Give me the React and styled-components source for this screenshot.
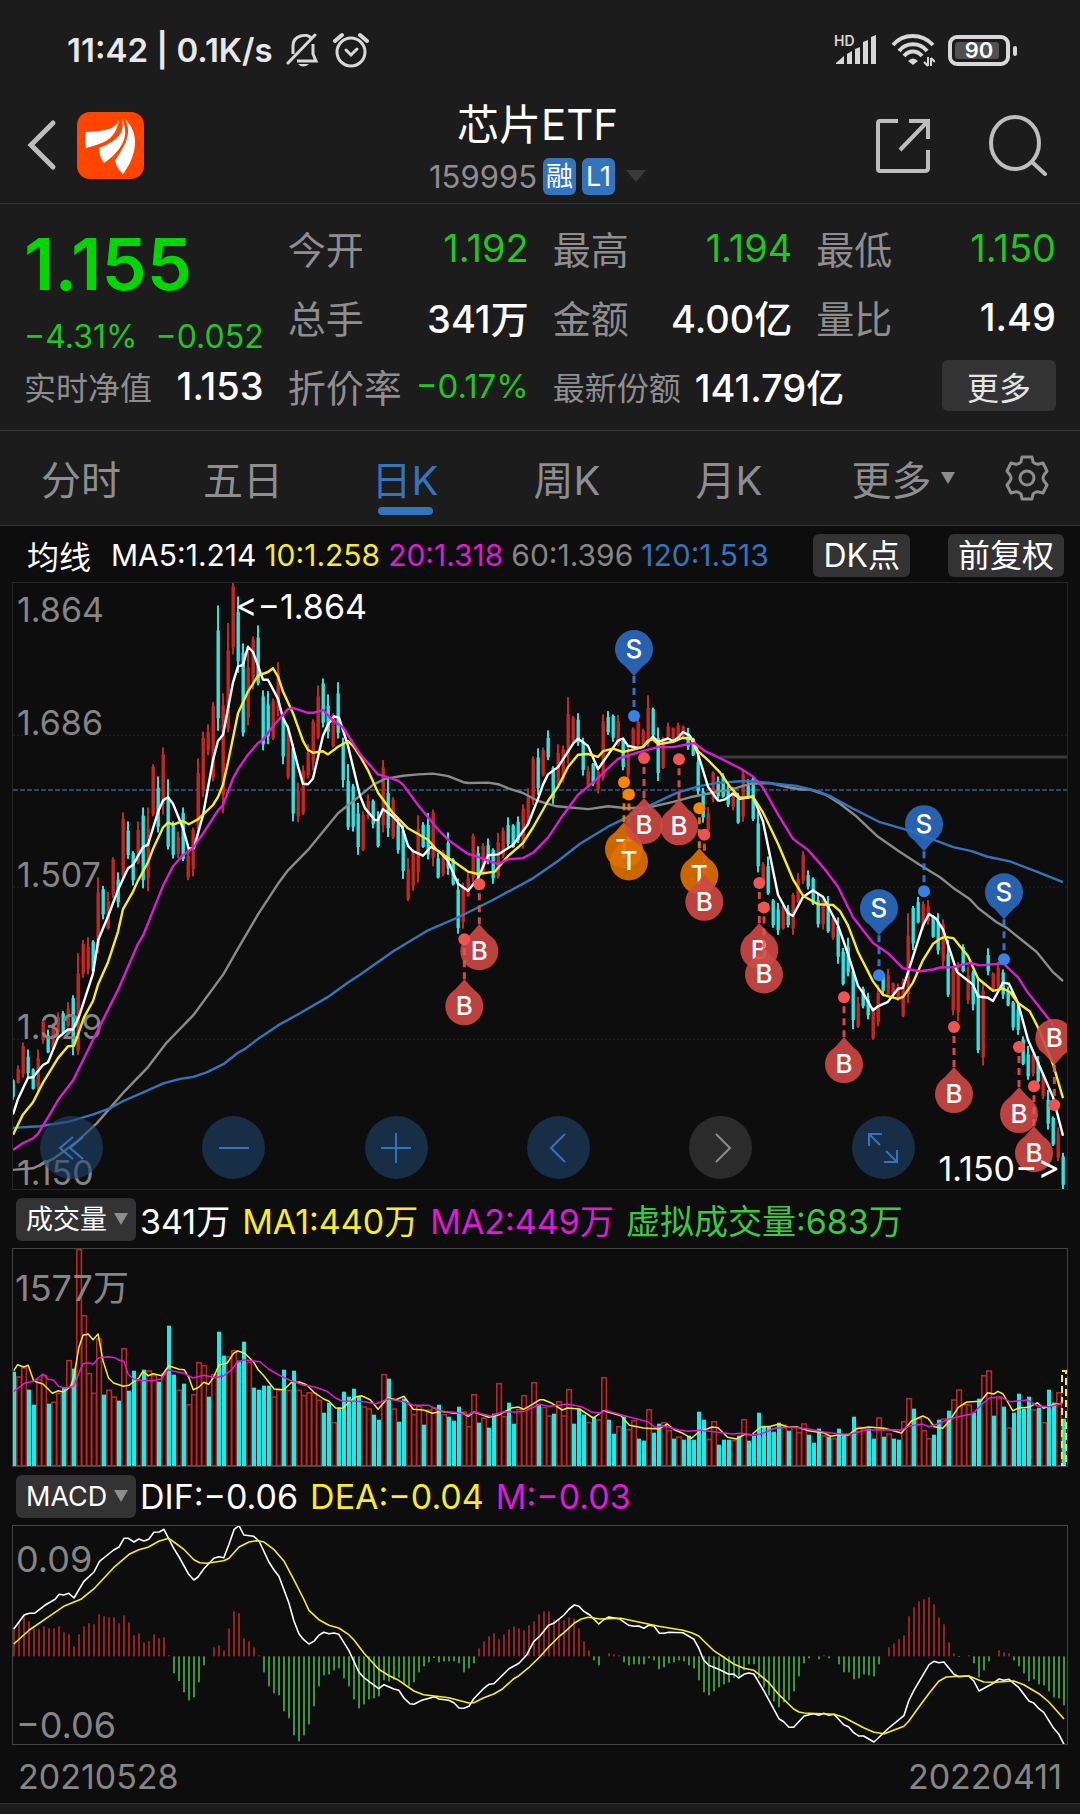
import React, { useState } from "react";
import styled, { createGlobalStyle } from "styled-components";

const UP = "#c32722";
const DOWN = "#2fe3e0";
const YELLOW = "#f8ea2c";
const MAGENTA = "#dd1bd6";
const BLUE = "#3474bd";
const GRAY = "#858585";

// r = closed up, c = closed down, followed by the high and low level
const CANDLES = `
c1247-1297 r1213-1257 r1157-1243 c1174-1242 c1220-1272 r1174-1275 r1100-1160 c1125-1183 r1110-1175 r1083-1140
c1080-1135 r1058-1120 c1041-1188 r938-1187 r906-998 r899-990 c906-985 r752-938 c773-855 r788-880
r703-803 c740-826 r593-755 c615-707 c688-772 r615-720 c581-779 r581-786 r475-603 c505-642
r434-598 c512-684 c615-706 r640-705 c581-712 r680-759 r630-750 r461-640 r395-555 r377-453
r323-517 c86-393 r301-595 r129-397 r31-206 c64-251 c179-407 r190-380 r162-292 c135-282
c294-441 c296-426 r314-416 r225-358 c350-475 r380-512 c425-615 r520-617 r478-600 r426-510
r365-490 r282-414 c265-385 c304-412 r350-434 c274-412 c410-532 c475-636 c523-640 c570-697
r590-688 r549-610 c561-632 c590-679 r465-642 c510-653 r556-658 c605-694 c625-756 r705-810
r683-785 r600-765 c617-680 c595-708 r586-725 c693-755 r685-750 c642-746 c705-772 c755-890
r765-878 r740-800 r645-765 c676-760 r668-745 c657-720 c681-768 r643-755 r630-705 c605-682
c622-680 c603-668 r573-682 r534-625 r456-575 c436-550 r434-505 c392-465 c480-572 r426-530
r429-520 r311-475 r357-425 c350-430 c410-503 r480-530 c472-528 r480-546 r353-515 c345-403
c353-420 r354-430 c410-490 r430-515 r385-440 r355-435 r388-435 r306-432 c336-412 c385-516
r408-487 r373-412 r385-415 r373-410 r380-410 c386-440 c410-455 c450-552 c533-618 r580-640
r492-568 c505-562 c497-557 c525-580 r530-588 c545-621 r487-616 c512-560 c505-614 c590-740
r715-770 c701-795 c805-876 c815-893 r818-880 c820-875 r790-893 r742-815 r688-768 c735-782
c752-820 c792-875 r795-880 c798-888 r850-905 c850-964 c925-1017 c900-995 c975-1124 r1045-1121
c1020-1073 c1035-1100 r1070-1150 r1015-1117 c985-1038 r976-1040 r1010-1045 r1012-1055 r1000-1095 r840-1060
c822-930 c800-865 r811-880 r808-868 c845-900 c840-941 r855-975 c905-1045 r970-1090 r960-1105
c916-985 r970-1062 c980-1078 c1000-1183 r1010-1213 c926-992 r985-1030 r960-1025 c978-1050 c1020-1068
c1055-1127 c1060-1138 c1142-1212 c1165-1248 r1185-1240 c1190-1255 r1230-1295 c1273-1370 c1338-1410 r1365-1447
c1427-1519`;

// every average is kept as three runs, one for each third of the plot
const AVERAGES = [
    {
        color: "#8a8a8a",
        runs: [
            "39,1469 99,1465 159,1442 189,1425 230,1400 290,1355 375,1275 444,1217 500,1157 580,1090 670,990 714,927 774,843 834,768 864,735 924,685 1014,595",
            "0,552 40,525 75,511 130,503 175,500 220,498 265,504 310,519 325,521 385,520 415,524 445,534 490,546 535,565 590,578 685,585 745,578 800,583 870,580 940,567 990,556",
            "0,541 30,538 90,523 150,521 195,530 245,537 270,537 320,551 360,572 405,600 470,650 540,690 600,722 660,752 700,778 750,806 775,828 830,862 860,876 950,935 1000,985 1029,1006",
        ],
    },
    {
        color: BLUE,
        runs: [
            "39,1366 120,1362 210,1350 280,1333 330,1318 370,1300 430,1279 490,1257 540,1246 580,1241 620,1230 670,1210 714,1182 734,1173 774,1148 834,1115 900,1085 984,1045 1044,1010",
            "0,991 100,933 204,882 300,848 400,807 520,754 594,712 660,670 744,628 820,598 870,576 950,545 1020,528",
            "0,520 75,516 115,518 180,524 230,528 290,540 330,553 400,584 480,617 570,638 640,660 700,678 755,688 800,701 870,713 950,738 1029,764",
        ],
    },
    {
        color: "#fff",
        runs: [
            "39,1333 54,1295 84,1243 99,1242 129,1212 144,1205 174,1145 204,1125 219,1125 237,1093 279,988 295,905 324,848 354,783 384,730 399,722 429,678 444,672 475,590 490,563 504,556 519,572 549,632 566,682 582,680 609,600 639,465 654,418 669,403 699,275 714,235 729,232 744,187 759,200 789,268 804,268 834,315 849,362 864,385 894,480 909,523 924,524 939,510 969,405 984,378 1002,358 1017,361 1044,430",
            "0,552 15,583 45,612 54,612 69,585 99,603 126,628 144,675 159,688 189,699 213,677 240,690 264,712 294,768 324,785 354,755 384,698 414,696 459,673 504,622 534,560 549,525 564,500 594,482 639,425 654,412 684,430 714,487 774,417 789,412 804,430 834,435 849,433 879,407 894,420 924,412 939,418 954,410 969,396 990,405 1014,450 1044,530 1074,564",
            "0,564 15,561 39,547 60,560 99,554 129,615 174,795 204,840 219,846 249,800 279,784 309,800 354,870 384,940 414,1018 429,1035 459,1078 474,1068 504,1057 534,1025 549,1023 609,870 627,842 648,853 669,880 711,984 759,1015 774,1044 804,1047 819,1055 849,1010 867,1013 894,1060 924,1150 999,1290 1029,1385",
        ],
    },
    {
        color: YELLOW,
        runs: [
            "39,1383 69,1333 99,1303 129,1255 174,1195 204,1166 222,1165 252,1095 279,1055 294,1015 324,960 354,885 369,830 399,787 414,760 444,715 459,683 489,630 504,618 519,623 549,614 566,622 594,610 639,575 654,555 669,525 684,470 714,350 744,297 774,258 804,249 819,240 834,260 849,297 879,350 909,418 924,440 939,447 969,443 984,451 1014,432 1044,418 1059,430",
            "0,455 24,490 54,545 99,595 144,632 204,660 234,688 279,712 324,738 354,744 405,738 444,700 489,668 519,630 564,565 594,530 624,482 654,452 684,450 714,457 729,443 759,437 789,445 834,436 849,432 864,417 879,414 894,426 939,420 969,410 999,414 1014,443 1044,465",
            "0,495 30,530 60,557 99,555 129,593 174,670 219,757 249,797 294,818 339,820 360,835 384,870 414,935 459,1007 489,1040 534,1050 549,1045 579,1010 609,955 639,915 660,903 675,898 700,901 744,945 774,1000 819,1030 849,1025 870,1033 894,1060 929,1080 954,1120 999,1210 1029,1293",
        ],
    },
    {
        color: MAGENTA,
        runs: [
            "39,1420 69,1403 99,1392 114,1380 144,1340 174,1298 219,1250 279,1150 354,1028 414,915 429,895 489,773 519,725 549,698 579,680 609,645 654,588 669,575 699,510 714,487 744,452 774,423 789,415 819,382 864,340 879,337 924,349 940,349 969,342 999,368 1029,385",
            "0,450 54,500 69,503 114,515 129,525 174,575 234,635 264,660 324,695 339,698 414,720 444,708 489,705 519,692 564,655 609,600 654,550 699,520 744,485 774,462 834,446 894,433 939,433 1003,423 1035,443",
            "0,460 60,485 99,505 129,532 174,598 219,658 264,685 309,727 354,775 399,850 459,913 504,938 549,975 600,982 640,978 660,973 700,972 750,962 780,968 850,963 894,997 924,1035 990,1103 1008,1125",
        ],
    },
];

// kind, position, level of the traded candle, 1 = pin below it, -1 = above it
const TRADES = [
    ["S", 1902, 357, -1],
    ["T", 1872, 519, 1],
    ["T", 1887, 549, 1],
    ["B", 1932, 460, 1],
    ["B", 2037, 463, 1],
    ["T", 2098, 583, 1],
    ["B", 2113, 648, 1],
    ["B", 1438, 769, 1],
    ["B", 1393, 904, 1],
    ["B", 2278, 766, 1],
    ["B", 2292, 826, 1],
    ["B", 2532, 1046, 1],
    ["S", 2637, 992, -1],
    ["S", 2772, 786, -1],
    ["S", 3012, 953, -1],
    ["B", 2862, 1119, 1],
    ["B", 3057, 1168, 1],
    ["B", 3102, 1264, 1],
    ["B", 3163, 1310, -1],
];

const TRADE_COLORS = {
    S: { pin: "#2c6cc0", dot: "#3583e6" },
    B: { pin: "#d04846", dot: "#f25352" },
    T: { pin: "#e07000", dot: "#ff8400" },
};

const VOLUMES = `
c543 r557 r530 c597 c642 r565 r553 c639 r633 r606 c590 r508 c534 r175 r373 r547 r606 r443 c612 r597
r617 c630 r472 c600 c540 r567 c537 r539 r553 c573 r548 c405 c552 r597 c579 r640 r610 r514 r523 c618
r550 c423 c495 r497 r478 c510 c453 r513 c591 c597 c585 c585 r617 r597 c537 r597 c540 r597 r613 r604
r606 r627 c666 c636 r694 c650 c603 c618 c594 c615 r647 r653 c672 c687 r550 c564 r653 c693 c624 r640
r670 r645 c702 r656 r650 c642 r670 c678 c690 c648 r662 r706 r610 c696 r680 c711 c669 r577 r676 c636
c699 r655 r613 r650 r574 c640 r648 r674 c669 r631 r674 r595 c699 c654 c672 r694 c678 r686 r559 c687
c729 r706 c678 r715 r688 c744 c750 r655 c726 c699 r694 r718 c744 r737 c747 c735 c747 c663 c687 r744
r691 c762 c747 c747 r748 c735 r685 c750 c735 c666 c705 c708 c723 c696 r702 c720 r706 r724 r698 c732
c756 c714 r734 c738 r742 c714 c735 r732 c678 r708 r712 c714 c744 r680 c738 r728 c744 c747 r691 r622
c654 r682 r718 r742 c732 c687 r683 c660 r626 r596 r640 r641 c666 c624 r553 r539 c675 r622 c648 r710
c666 c609 c654 c618 r656 c651 r694 c597 c636 r604 c684`;

const VOLUME_LINES = [
    {
        color: YELLOW,
        runs: [
            "40,540 51,522 69,529 82,524 98,571 125,580 152,608 170,600 185,604 205,588 214,560 229,470 241,434 256,430 270,447 285,430 299,510 315,562 330,577 358,587 374,584 403,562 415,542 430,555 445,549 470,555 490,525 520,536 535,537 548,560 561,597 577,590 592,575 606,581 620,560 636,523 660,517 678,488 690,481 710,487 737,515 750,538 766,555 796,595 825,597 845,576 870,574 890,582 912,605 940,625 955,632 975,652 995,653 1030,620 1050,615 1075,627 1098,656 1127,621 1150,627 1173,617 1200,656 1230,658 1256,668 1283,662 1318,668 1345,668 1360,677 1376,664 1420,680 1450,672 1485,652 1505,649 1520,656 1540,645",
            "0,627 10,627 35,638 65,658 80,652 115,655 155,682 185,660 235,675 260,704 300,712 345,715 370,700 390,717 415,728 440,743 465,720 485,715 500,709 517,711 545,740 570,745 595,731 615,732 640,710 670,707 695,700 720,710 745,708 780,720 825,727 845,737 870,732 895,733 920,714 955,709 1000,713 1050,727 1060,714 1080,690 1112,676 1128,684 1145,708 1170,713 1190,690 1215,650 1240,634 1280,632 1300,606 1318,610 1330,602 1345,610 1373,660 1390,652 1420,650 1445,636 1462,653 1490,642 1518,638",
        ],
    },
    {
        color: MAGENTA,
        runs: [
            "40,602 72,577 98,572 125,550 140,566 155,568 170,587 190,592 214,587 229,548 241,519 258,516 270,521 287,501 315,498 333,501 345,508 360,512 372,551 389,566 415,570 440,570 470,564 488,537 505,542 535,548 560,562 592,554 625,561 650,555 670,540 690,514 710,507 737,511 755,513 780,535 810,553 840,568 880,583 912,588 950,602 975,622 995,632 1030,632 1060,633 1090,640 1127,625 1175,633 1200,644 1245,644 1283,663 1318,665 1360,672 1376,664 1425,676 1460,664 1505,664 1525,661",
            "0,641 25,647 60,643 80,640 120,648 150,664 175,667 190,659 235,672 290,687 315,694 333,710 360,706 405,718 430,722 465,719 505,723 560,730 580,728 615,732 640,731 685,712 740,710 780,715 825,724 870,730 905,729 945,719 985,717 1050,718 1070,707 1110,700 1130,708 1155,700 1190,684 1225,676 1255,670 1285,640 1305,622 1335,618 1365,633 1415,628 1445,646 1480,648 1518,637",
        ],
    },
];

const HISTOGRAM = `
470 455 437 453 475 477 468 474 474 468 486 492 528 492 468 459 462 432 438 441
441 459 435 456 495 489 516 513 492 504 501 555 609 632 666 690 681 636 585 558
531 525 540 474 423 429 504 513 531 555 606 648 669 675 723 744 795 813 795 762
708 648 615 612 600 594 624 648 687 714 702 687 684 678 630 633 628 622 642 648
636 606 588 576 563 576 573 573 573 579 606 594 579 534 513 498 489 507 492 477
468 474 480 465 453 432 423 423 447 447 450 441 444 474 513 540 570 585 558 549
552 555 576 585 582 582 582 564 570 597 591 579 576 570 573 585 594 630 666 675
663 651 642 636 622 618 600 582 582 624 651 675 693 711 696 690 663 618 579 564
558 567 555 564 558 582 606 606 627 624 612 615 618 582 558 531 519 507 495 438
411 393 387 381 402 441 462 516 549 560 558 555 579 621 600 573 558 540 546 549
570 588 609 633 627 642 645 663 681 684 705`;

const MACD_LINES = [
    {
        color: "#fff",
        runs: [
            "40,476 70,434 85,429 100,429 130,405 160,387 172,372 185,374 200,369 215,383 243,334 273,305 289,273 330,239 346,230 360,204 373,204 389,215 403,206 418,212 432,207 447,186 463,185 476,177 505,235 520,260 548,312 563,329 575,320 592,295 621,264 636,259 650,262 665,222 680,177 694,166 708,194 737,198 752,212 781,275 796,299 810,318 839,398 853,450 868,490 882,508 897,521 912,513 926,495 940,486 955,490 970,488 984,492 1013,540 1042,605 1057,622 1071,633 1100,655 1115,643 1144,656 1158,660 1173,683 1190,700 1202,702 1225,690 1262,679 1275,686 1303,690 1318,697 1333,713 1347,714 1362,708 1376,685 1405,654 1420,642 1434,640 1478,595 1507,579 1530,553 1550,514",
            "0,497 25,465 40,459 70,434 85,416 100,404 113,408 127,423 145,434 171,461 185,448 200,440 230,445 258,465 273,468 287,467 302,474 316,465 331,467 347,489 360,489 375,486 415,487 447,507 461,533 475,568 490,585 519,597 548,612 563,611 577,623 592,612 606,608 621,611 650,661 694,745 708,754 723,771 737,771 767,737 781,733 796,730 810,735 824,729 839,735 854,732 882,763 897,770 911,787 926,797 940,797 970,815 1013,773 1057,736 1071,692 1086,660 1130,583 1144,573 1158,577 1173,575 1202,612 1216,619 1245,617 1260,632 1275,662 1318,638 1333,626 1347,630 1362,627 1391,652 1420,692 1434,698 1449,715 1463,726 1492,774 1507,792 1522,822",
        ],
    },
    {
        color: YELLOW,
        runs: [
            "40,521 85,479 130,447 185,408 235,387 273,355 330,292 375,252 403,238 430,231 461,213 490,204 505,215 535,238 563,268 580,277 600,279 650,271 665,264 694,230 723,215 745,211 765,214 796,238 825,273 853,327 882,386 897,420 926,448 955,465 984,473 1013,493 1028,509 1057,549 1100,597 1130,616 1158,630 1202,662 1230,673 1262,677 1303,682 1362,698 1376,697 1405,682 1434,671 1460,655 1492,625 1507,616 1535,592",
            "0,559 25,530 55,499 70,487 100,458 120,446 140,441 175,446 235,444 345,468 415,480 440,487 461,497 505,541 563,581 592,594 621,600 636,612 665,637 694,673 737,716 752,725 767,728 854,732 882,741 940,772 970,786 1000,790 1057,768 1071,753 1100,711 1130,669 1158,633 1180,620 1216,618 1245,617 1289,635 1320,636 1376,632 1405,643 1449,670 1478,695 1522,746",
        ],
    },
];

const words = (text) => text.trim().split(/\s+/);
const barX = (i) => i * 5;

// price plot scale
const priceX = (x) => x / 3 - 13;
const priceY = (v) => (v - 31) / 2.45;

// scale of the two lower plots
const subX = (x) => x / 2.904 - 13;
const subY = (top) => (v) => (v - top) / 3;
const volumeY = subY(175);
const macdY = subY(167);

const toPoints = (runs, span, fx, fy) =>
    runs
        .map((run, part) =>
            words(run)
                .map((pair) => {
                    const [x, y] = pair.split(",").map(Number);
                    return `${fx(x + part * span).toFixed(1)},${fy(y).toFixed(1)}`;
                })
                .join(" ")
        )
        .join(" ");

const Trade = ({ kind, x, y, side }) => {
    const { pin, dot } = TRADE_COLORS[kind];
    const cy = y + side * 67;
    const tip = cy - side * 27;
    return (
        <g>
            <g opacity="0.9">
                <circle cx={x} cy={cy} r="19" fill={pin} />
                <path d={`M${x - 10} ${cy - side * 16} L${x} ${tip} L${x + 10} ${cy - side * 16} Z`} fill={pin} />
            </g>
            <line x1={x} y1={tip} x2={x} y2={y} stroke={dot} strokeWidth="3" strokeDasharray="7 5" opacity="0.85" />
            <ChartText x={x} y={cy + 9} $size={26} $medium textAnchor="middle" fill="#fff">{kind}</ChartText>
            <circle cx={x} cy={y} r="6" fill={dot} />
        </g>
    );
};

const PriceChart = () => (
    <Plot viewBox="0 0 1054 606" role="img" aria-label="日K">
        {[404, 776, 1149].map((v) => (
            <line key={v} x1="0" x2="1054" y1={priceY(v)} y2={priceY(v)} stroke="#222" strokeDasharray="2 2" />
        ))}
        <line x1="0" x2="1054" y1="207" y2="207" stroke="#2f5b92" strokeWidth="1.4" strokeDasharray="5 2" />
        <line x1="707" x2="1054" y1={priceY(457)} y2={priceY(457)} stroke="#3a3a3a" strokeWidth="3" />
        {words(CANDLES).map((candle, i) => {
            const [high, low] = candle.slice(1).split("-").map((v) => priceY(Number(v)));
            const size = low - high;
            const top = high + size * [0.05, 0.2, 0.1, 0.25][i % 4];
            const bottom = low - size * [0.15, 0.04, 0.1][i % 3];
            const color = candle[0] === "r" ? UP : DOWN;
            return (
                <g key={i} fill={color}>
                    <rect x={barX(i) - 1} y={high} width="2" height={size} />
                    <rect x={barX(i) - 1.5} y={top} width="3.4" height={bottom - top} />
                </g>
            );
        })}
        <ChartText x="4" y="39" fill={GRAY}>1.864</ChartText>
        <ChartText x="4" y="152" fill={GRAY}>1.686</ChartText>
        <ChartText x="4" y="304" fill={GRAY}>1.507</ChartText>
        <ChartText x="4" y="456" fill={GRAY}>1.329</ChartText>
        <ChartText x="4" y="602" fill={GRAY}>1.150</ChartText>
        {AVERAGES.map(({ color, runs }) => (
            <polyline key={color} points={toPoints(runs, 1080, priceX, priceY)} fill="none" stroke={color} strokeWidth="2.4" strokeLinejoin="round" />
        ))}
        {TRADES.map(([kind, x, v, side]) => (
            <Trade key={`${x}-${v}`} kind={kind} x={priceX(x)} y={priceY(v)} side={side} />
        ))}
        <ChartText x="222" y="36" fill="#fff">&lt;−1.864</ChartText>
        <ChartText x="1047" y="598" fill="#fff" textAnchor="end">1.150−&gt;</ChartText>
    </Plot>
);

const VolumeChart = () => (
    <Plot viewBox="0 0 1054 217" role="img" aria-label="成交量">
        {words(VOLUMES).map((bar, i) => {
            const y = volumeY(Number(bar.slice(1)));
            return bar[0] === "c" ? (
                <rect key={i} x={barX(i) - 1} y={y} width="4" height={217 - y} fill="#17ece9" />
            ) : (
                <rect key={i} x={barX(i) - 1.2} y={y + 0.7} width="4.6" height={216 - y} fill="#1c0505" stroke="#b02c29" strokeWidth="1.6" />
            );
        })}
        <rect x="1049" y={volumeY(541)} width="4" height={217 - volumeY(541)} fill="none" stroke={YELLOW} strokeWidth="2" strokeDasharray="7 4" />
        {VOLUME_LINES.map(({ color, runs }) => (
            <polyline key={color} points={toPoints(runs, 1568, subX, volumeY)} fill="none" stroke={color} strokeWidth="1.5" strokeLinejoin="round" />
        ))}
        <ChartText x="2" y="52" $size={36} fill={GRAY}>1577万</ChartText>
    </Plot>
);

const MacdChart = () => (
    <Plot viewBox="0 0 1054 218" role="img" aria-label="MACD">
        {words(HISTOGRAM).map((v, i) => {
            const y = macdY(Number(v));
            const zero = macdY(558);
            return (
                <rect key={i} x={barX(i)} y={Math.min(y, zero)} width="2" height={Math.abs(y - zero)} fill={y < zero ? "#8c2422" : "#3d9440"} />
            );
        })}
        <ChartText x="3" y="46" $size={36} fill={GRAY}>0.09</ChartText>
        <ChartText x="3" y="212" $size={36} fill={GRAY}>−0.06</ChartText>
        {MACD_LINES.map(({ color, runs }) => (
            <polyline key={color} points={toPoints(runs, 1568, subX, macdY)} fill="none" stroke={color} strokeWidth="1.6" strokeLinejoin="round" />
        ))}
    </Plot>
);

const StatusIcons = () => (
    <StatusGroup>
        <svg width="44" height="36" viewBox="0 0 44 36" fill="#d8d8d8">
            <text x="0" y="14" fontSize="14" fontWeight="600" fontFamily="Inter, sans-serif">HD</text>
            <path d="M2 32 V31 L10 24 V32 Z M13 32 V22 L18 19 V32 Z M21 32 V17 L26 15 V32 Z M29 32 V10 L34 8 V32 Z M37 32 V5 L42 3 V32 Z" />
        </svg>
        <svg width="44" height="36" viewBox="0 0 44 36" fill="none" stroke="#d8d8d8" strokeWidth="4">
            <path d="M2 13 C12 1 31 1 42 13" />
            <path d="M8 19 C15 10 29 10 36 19" />
            <path d="M13 24 C18 18 26 18 31 24" />
            <path d="M22 33 L17 29 Q22 24 27 29 Z" fill="#d8d8d8" stroke="none" />
            <path d="M37 25 V34 M37 34 L33 30 M40 34 V26 M40 26 L44 30" strokeWidth="2" />
        </svg>
        <svg width="70" height="32" viewBox="0 0 70 32">
            <rect x="2" y="3" width="58" height="27" rx="7" fill="none" stroke="#d8d8d8" strokeWidth="4" />
            <rect x="7" y="8" width="44" height="17" rx="3" fill="#505050" />
            <rect x="65" y="12" width="4" height="10" rx="2" fill="#d8d8d8" />
            <text x="31" y="24" fontSize="22" fontWeight="600" textAnchor="middle" fill="#fff" fontFamily="Inter, sans-serif">90</text>
        </svg>
    </StatusGroup>
);

const BellOffIcon = () => (
    <svg width="34" height="36" viewBox="0 0 34 36" fill="none" stroke="#d8d8d8" strokeWidth="3">
        <path d="M7 22 V14 C7 3 21 1 25 6 M27 12 V22 L30 29 H11" />
        <path d="M2 31 L29 3" strokeLinecap="round" />
        <path d="M12 32 H23 Q17 37 12 32 Z" fill="#d8d8d8" stroke="none" />
    </svg>
);

const AlarmIcon = () => (
    <svg width="36" height="36" viewBox="0 0 36 36" fill="none" stroke="#d8d8d8" strokeWidth="3" strokeLinecap="round">
        <circle cx="18" cy="20" r="14" />
        <path d="M13 18 L18 23 L24 17" />
        <path d="M2 9 L9 3 M34 9 L27 3" strokeWidth="4" />
    </svg>
);

const GearIcon = () => (
    <svg width="44" height="46" viewBox="0 0 44 46" fill="none" stroke="#8e8e90" strokeWidth="3" strokeLinejoin="round">
        <path d="M17 2 H27 L28 7 Q31 10 34 9 L38 8 L42 16 L39 20 Q37 23 39 26 L42 30 L38 38 L34 37 Q31 36 28 39 L27 44 H17 L16 39 Q13 36 10 37 L6 38 L2 30 L5 26 Q7 23 5 20 L2 16 L6 8 L10 9 Q13 10 16 7 Z" />
        <circle cx="22" cy="23" r="7" />
    </svg>
);

const LogoIcon = () => (
    <svg width="67" height="67" viewBox="0 0 67 67">
        <rect width="67" height="67" rx="13" fill="#ff4500" />
        <path d="M42 7 C40 15 34 19 9 20 C8 26 8 31 9 36 C27 31 39 28 42 7 Z" fill="#fff" />
        <path d="M45 7 C49 23 36 31 22 36 C22 42 24 47 27 51 C43 40 54 25 45 7 Z" fill="#fff" />
        <path d="M48 7 C57 24 44 38 38 49 C39 54 42 58 46 62 C59 45 64 22 48 7 Z" fill="#fff" />
    </svg>
);

const Caret = ({ width, color }) => (
    <svg width={width} height="12" viewBox="0 0 20 12" preserveAspectRatio="none" aria-hidden="true">
        <path d="M0 0 H20 L10 12 Z" fill={color} />
    </svg>
);

const TABS = ["分时", "五日", "日K", "周K", "月K"];

const CONTROLS = [
    { label: "最早", path: "M24 12 L11 23 L24 34 M34 12 L21 23 L34 34" },
    { label: "缩小", path: "M8 23 H38" },
    { label: "放大", path: "M8 23 H38 M23 8 V38" },
    { label: "向左", path: "M29 9 L15 23 L29 37" },
    { label: "向右", path: "M18 9 L32 23 L18 37", muted: true },
    { label: "全屏", path: "M9 21 V9 H22 M9 9 L20 20 M37 25 V37 H24 M37 37 L26 26" },
];

const App = () => {
    const [tab, setTab] = useState("日K");

    return (
        <Page>
            <GlobalStyle />
            <StatusBar>
                <StatusGroup>
                    <Clock>11:42 | 0.1K/s</Clock>
                    <BellOffIcon />
                    <AlarmIcon />
                </StatusGroup>
                <StatusIcons />
            </StatusBar>

            <Header>
                <HeaderSide>
                    <IconButton aria-label="返回">
                        <svg width="30" height="52" viewBox="0 0 30 52" fill="none" stroke="#bdbdbd" strokeWidth="5" strokeLinecap="round">
                            <path d="M26 4 L4 26 L26 48" />
                        </svg>
                    </IconButton>
                    <LogoIcon />
                </HeaderSide>
                <TitleBlock>
                    <Title>芯片ETF</Title>
                    <Code>
                        159995
                        <Badge>融</Badge>
                        <Badge>L1</Badge>
                        <CodeCaret><Caret width="20" color="#3a3a3a" /></CodeCaret>
                    </Code>
                </TitleBlock>
                <HeaderSide $end>
                    <IconButton aria-label="分享">
                        <svg width="54" height="56" viewBox="0 0 54 56" fill="none" stroke="#bdbdbd" strokeWidth="4">
                            <path d="M22 4 H4 Q2 4 2 6 V52 Q2 54 4 54 H49 Q52 54 52 51 V33" />
                            <path d="M33 4 H52 V22 M51 5 L24 33" />
                        </svg>
                    </IconButton>
                    <IconButton aria-label="搜索">
                        <svg width="60" height="62" viewBox="0 0 60 62" fill="none" stroke="#bdbdbd" strokeWidth="4" strokeLinecap="round">
                            <ellipse cx="27" cy="29" rx="24" ry="26" />
                            <path d="M44 48 L57 60" />
                        </svg>
                    </IconButton>
                </HeaderSide>
            </Header>

            <Quote>
                <PriceBlock>
                    <Price>1.155</Price>
                    <Change>
                        <span>−4.31%</span>
                        <span>−0.052</span>
                    </Change>
                </PriceBlock>
                <Stat><dt>今开</dt><Value $down>1.192</Value></Stat>
                <Stat><dt>最高</dt><Value $down>1.194</Value></Stat>
                <Stat><dt>最低</dt><Value $down>1.150</Value></Stat>
                <Stat><dt>总手</dt><Value>341万</Value></Stat>
                <Stat><dt>金额</dt><Value>4.00亿</Value></Stat>
                <Stat><dt>量比</dt><Value>1.49</Value></Stat>
                <Stat $small><dt>实时净值</dt><Value>1.153</Value></Stat>
                <Stat><dt>折价率</dt><Value $down $small>−0.17%</Value></Stat>
                <WideStat>
                    <Stat $small><dt>最新份额</dt><Value>141.79亿</Value></Stat>
                    <MoreButton>更多</MoreButton>
                </WideStat>
            </Quote>

            <Tabs>
                {TABS.map((name) => (
                    <Tab key={name} $active={name === tab} onClick={() => setTab(name)}>{name}</Tab>
                ))}
                <Tab>更多<Caret width="14" color="#8e8e90" /></Tab>
                <IconButton aria-label="设置"><GearIcon /></IconButton>
            </Tabs>

            <Legend>
                <LegendTitle>均线</LegendTitle>
                <MaItem $color="#fff">MA5:1.214</MaItem>
                <MaItem $color={YELLOW}>10:1.258</MaItem>
                <MaItem $color={MAGENTA}>20:1.318</MaItem>
                <MaItem $color={GRAY}>60:1.396</MaItem>
                <MaItem $color={BLUE}>120:1.513</MaItem>
                <LegendButtons>
                    <Chip>DK点</Chip>
                    <Chip>前复权</Chip>
                </LegendButtons>
            </Legend>
            <Frame $border="#262626">
                <PriceChart />
                <Controls>
                    {CONTROLS.map(({ label, path, muted }) => (
                        <RoundButton key={label} aria-label={label} $muted={muted}>
                            <svg width="46" height="46" viewBox="0 0 46 46" fill="none" stroke="currentColor" strokeWidth="2">
                                <path d={path} />
                            </svg>
                        </RoundButton>
                    ))}
                </Controls>
            </Frame>

            <IndicatorRow>
                <SelectBox>
                    <Select aria-label="副图一"><option>成交量</option></Select>
                    <Caret width="14" color="#8e8e90" />
                </SelectBox>
                <Indicator $color="#fff">341万</Indicator>
                <Indicator $color={YELLOW}>MA1:440万</Indicator>
                <Indicator $color={MAGENTA}>MA2:449万</Indicator>
                <Indicator $color="#3cc940">虚拟成交量:683万</Indicator>
            </IndicatorRow>
            <Frame $border="#444">
                <VolumeChart />
            </Frame>

            <IndicatorRow>
                <SelectBox>
                    <Select aria-label="副图二"><option>MACD</option></Select>
                    <Caret width="14" color="#8e8e90" />
                </SelectBox>
                <Indicator $color="#fff">DIF:−0.06</Indicator>
                <Indicator $color={YELLOW}>DEA:−0.04</Indicator>
                <Indicator $color={MAGENTA}>M:−0.03</Indicator>
            </IndicatorRow>
            <Frame $border="#444">
                <MacdChart />
            </Frame>

            <Dates>
                <span>20210528</span>
                <span>20220411</span>
            </Dates>
            <BottomBar />
        </Page>
    );
};

export default App;

const GlobalStyle = createGlobalStyle`
    *, *::before, *::after {
        box-sizing: border-box;
    }
    body {
        margin: 0;
        background: #0d0d0d;
        font-family: Inter, "Noto Sans CJK SC", sans-serif;
    }
    button, select {
        font-family: inherit;
        border: 0;
        padding: 0;
        background: none;
    }
    svg {
        display: block;
        flex-shrink: 0;
    }
`
const Page = styled.main`
    display: flex;
    flex-direction: column;
    color: #fff;
    white-space: nowrap;
`
const StatusBar = styled.div`
    display: flex;
    justify-content: space-between;
    align-items: center;
    height: 90px;
    padding: 10px 62px 0 67px;
    background: #1c1c1c;
`
const StatusGroup = styled.div`
    display: flex;
    align-items: center;
    gap: 13px;
`
const Clock = styled.span`
    font-size: 33px;
    font-weight: 600;
    color: #e8e8e8;
`
const Header = styled.header`
    display: grid;
    grid-template-columns: 1fr auto 1fr;
    align-items: center;
    height: 114px;
    padding: 0 32px 18px 27px;
    background: #1c1c1c;
    border-bottom: 1px solid #333;
`
const HeaderSide = styled.div`
    display: flex;
    align-items: center;
    justify-content: ${({ $end }) => ($end ? "flex-end" : "flex-start")};
    gap: ${({ $end }) => ($end ? "58px" : "20px")};
`
const IconButton = styled.button`
    display: flex;
    align-items: center;
    justify-content: center;
    cursor: pointer;
`
const TitleBlock = styled.div`
    display: flex;
    flex-direction: column;
    align-items: center;
    padding-top: 8px;
`
const Title = styled.h1`
    margin: 0;
    font-size: 42px;
    font-weight: 400;
    line-height: 54px;
`
const Code = styled.div`
    display: flex;
    align-items: center;
    gap: 6px;
    height: 48px;
    font-size: 31px;
    color: #8e8e90;
`
const Badge = styled.span`
    min-width: 33px;
    height: 37px;
    border-radius: 6px;
    background: ${BLUE};
    color: #fff;
    font-size: 27px;
    line-height: 37px;
    text-align: center;
`
const CodeCaret = styled.span`
    padding-left: 5px;
`
const Quote = styled.dl`
    display: grid;
    grid-template-columns: repeat(4, 1fr);
    grid-template-rows: repeat(3, 69px);
    column-gap: 24px;
    margin: 0;
    padding: 9px 24px 10px;
    background: #1c1c1c;
    border-bottom: 1px solid #333;
`
const PriceBlock = styled.div`
    grid-row: span 2;
    display: flex;
    flex-direction: column;
    gap: 12px;
    padding-top: 13px;
`
const Price = styled.div`
    font-size: 72px;
    font-weight: 600;
    line-height: 76px;
    color: #00d600;
`
const Change = styled.div`
    display: flex;
    justify-content: space-between;
    font-size: 32px;
    line-height: 46px;
    color: #22c522;
`
const Stat = styled.div`
    display: flex;
    align-items: center;
    justify-content: space-between;
    gap: 14px;
    color: #8e8e90;
    font-size: ${({ $small }) => ($small ? "32px" : "38px")};
`
const Value = styled.dd`
    margin: 0;
    font-size: ${({ $small }) => ($small ? "33px" : "38px")};
    font-weight: ${({ $down }) => ($down ? 400 : 500)};
    color: ${({ $down }) => ($down ? "#22c522" : "#fff")};
`
const WideStat = styled.div`
    grid-column: span 2;
    display: flex;
    align-items: center;
    justify-content: space-between;
`
const MoreButton = styled.button`
    width: 114px;
    height: 51px;
    border-radius: 6px;
    background: #333;
    color: #e4e4e4;
    font-size: 32px;
    cursor: pointer;
`
const Tabs = styled.nav`
    display: grid;
    grid-template-columns: repeat(5, 1fr) 186px 62px;
    height: 95px;
    padding-right: 22px;
    background: #1c1c1c;
    border-bottom: 1px solid #333;
`
const Tab = styled.button`
    position: relative;
    display: flex;
    align-items: center;
    justify-content: center;
    gap: 9px;
    font-size: 40px;
    color: ${({ $active }) => ($active ? BLUE : "#8e8e90")};
    cursor: pointer;

    &::after {
        content: "";
        display: ${({ $active }) => ($active ? "block" : "none")};
        position: absolute;
        bottom: 10px;
        width: 55px;
        height: 8px;
        border-radius: 4px;
        background: ${BLUE};
    }
`
const Legend = styled.div`
    display: flex;
    align-items: center;
    gap: 8px;
    height: 56px;
    padding: 2px 16px 0 27px;
`
const LegendTitle = styled.span`
    margin-right: 12px;
    font-size: 32px;
`
const MaItem = styled.span`
    font-size: 30px;
    color: ${({ $color }) => $color};
`
const LegendButtons = styled.div`
    display: flex;
    gap: 38px;
    margin-left: auto;
`
const Chip = styled.button`
    height: 43px;
    padding: 0 10px;
    border-radius: 6px;
    background: #333;
    color: #fff;
    font-size: 32px;
    line-height: 43px;
    cursor: pointer;
`
const Frame = styled.section`
    position: relative;
    margin: 0 12px;
    border: 1px solid ${({ $border }) => $border};
`
const Plot = styled.svg`
    width: 100%;
    height: auto;
    overflow: hidden;
`
const ChartText = styled.text`
    font-size: ${({ $size = 34 }) => $size}px;
    font-weight: ${({ $medium }) => ($medium ? 500 : 400)};
`
const Controls = styled.div`
    position: absolute;
    left: 27px;
    bottom: 10px;
    display: flex;
    justify-content: space-between;
    width: 83%;
`
const RoundButton = styled.button`
    display: flex;
    align-items: center;
    justify-content: center;
    width: 63px;
    height: 63px;
    border-radius: 50%;
    background: ${({ $muted }) => ($muted ? "rgba(64, 64, 64, 0.6)" : "rgba(32, 66, 108, 0.6)")};
    color: ${({ $muted }) => ($muted ? "#8e8e90" : BLUE)};
    cursor: pointer;
`
const IndicatorRow = styled.div`
    display: flex;
    align-items: center;
    gap: 12px;
    height: 58px;
    padding: 0 16px;
`
const SelectBox = styled.div`
    display: flex;
    align-items: center;
    height: 43px;
    margin-right: -8px;
    padding: 0 8px 0 10px;
    border-radius: 6px;
    background: #333;
`
const Select = styled.select`
    appearance: none;
    width: 88px;
    height: 43px;
    color: #fff;
    font-size: 27px;
    cursor: pointer;
`
const Indicator = styled.span`
    font-size: 34px;
    color: ${({ $color }) => $color};
`
const Dates = styled.div`
    display: flex;
    justify-content: space-between;
    align-items: center;
    height: 58px;
    padding: 4px 18px 0;
    font-size: 34px;
    color: ${GRAY};
`
const BottomBar = styled.footer`
    height: 12px;
    background: #1c1c1c;
    border-top: 1px solid #333;
`
